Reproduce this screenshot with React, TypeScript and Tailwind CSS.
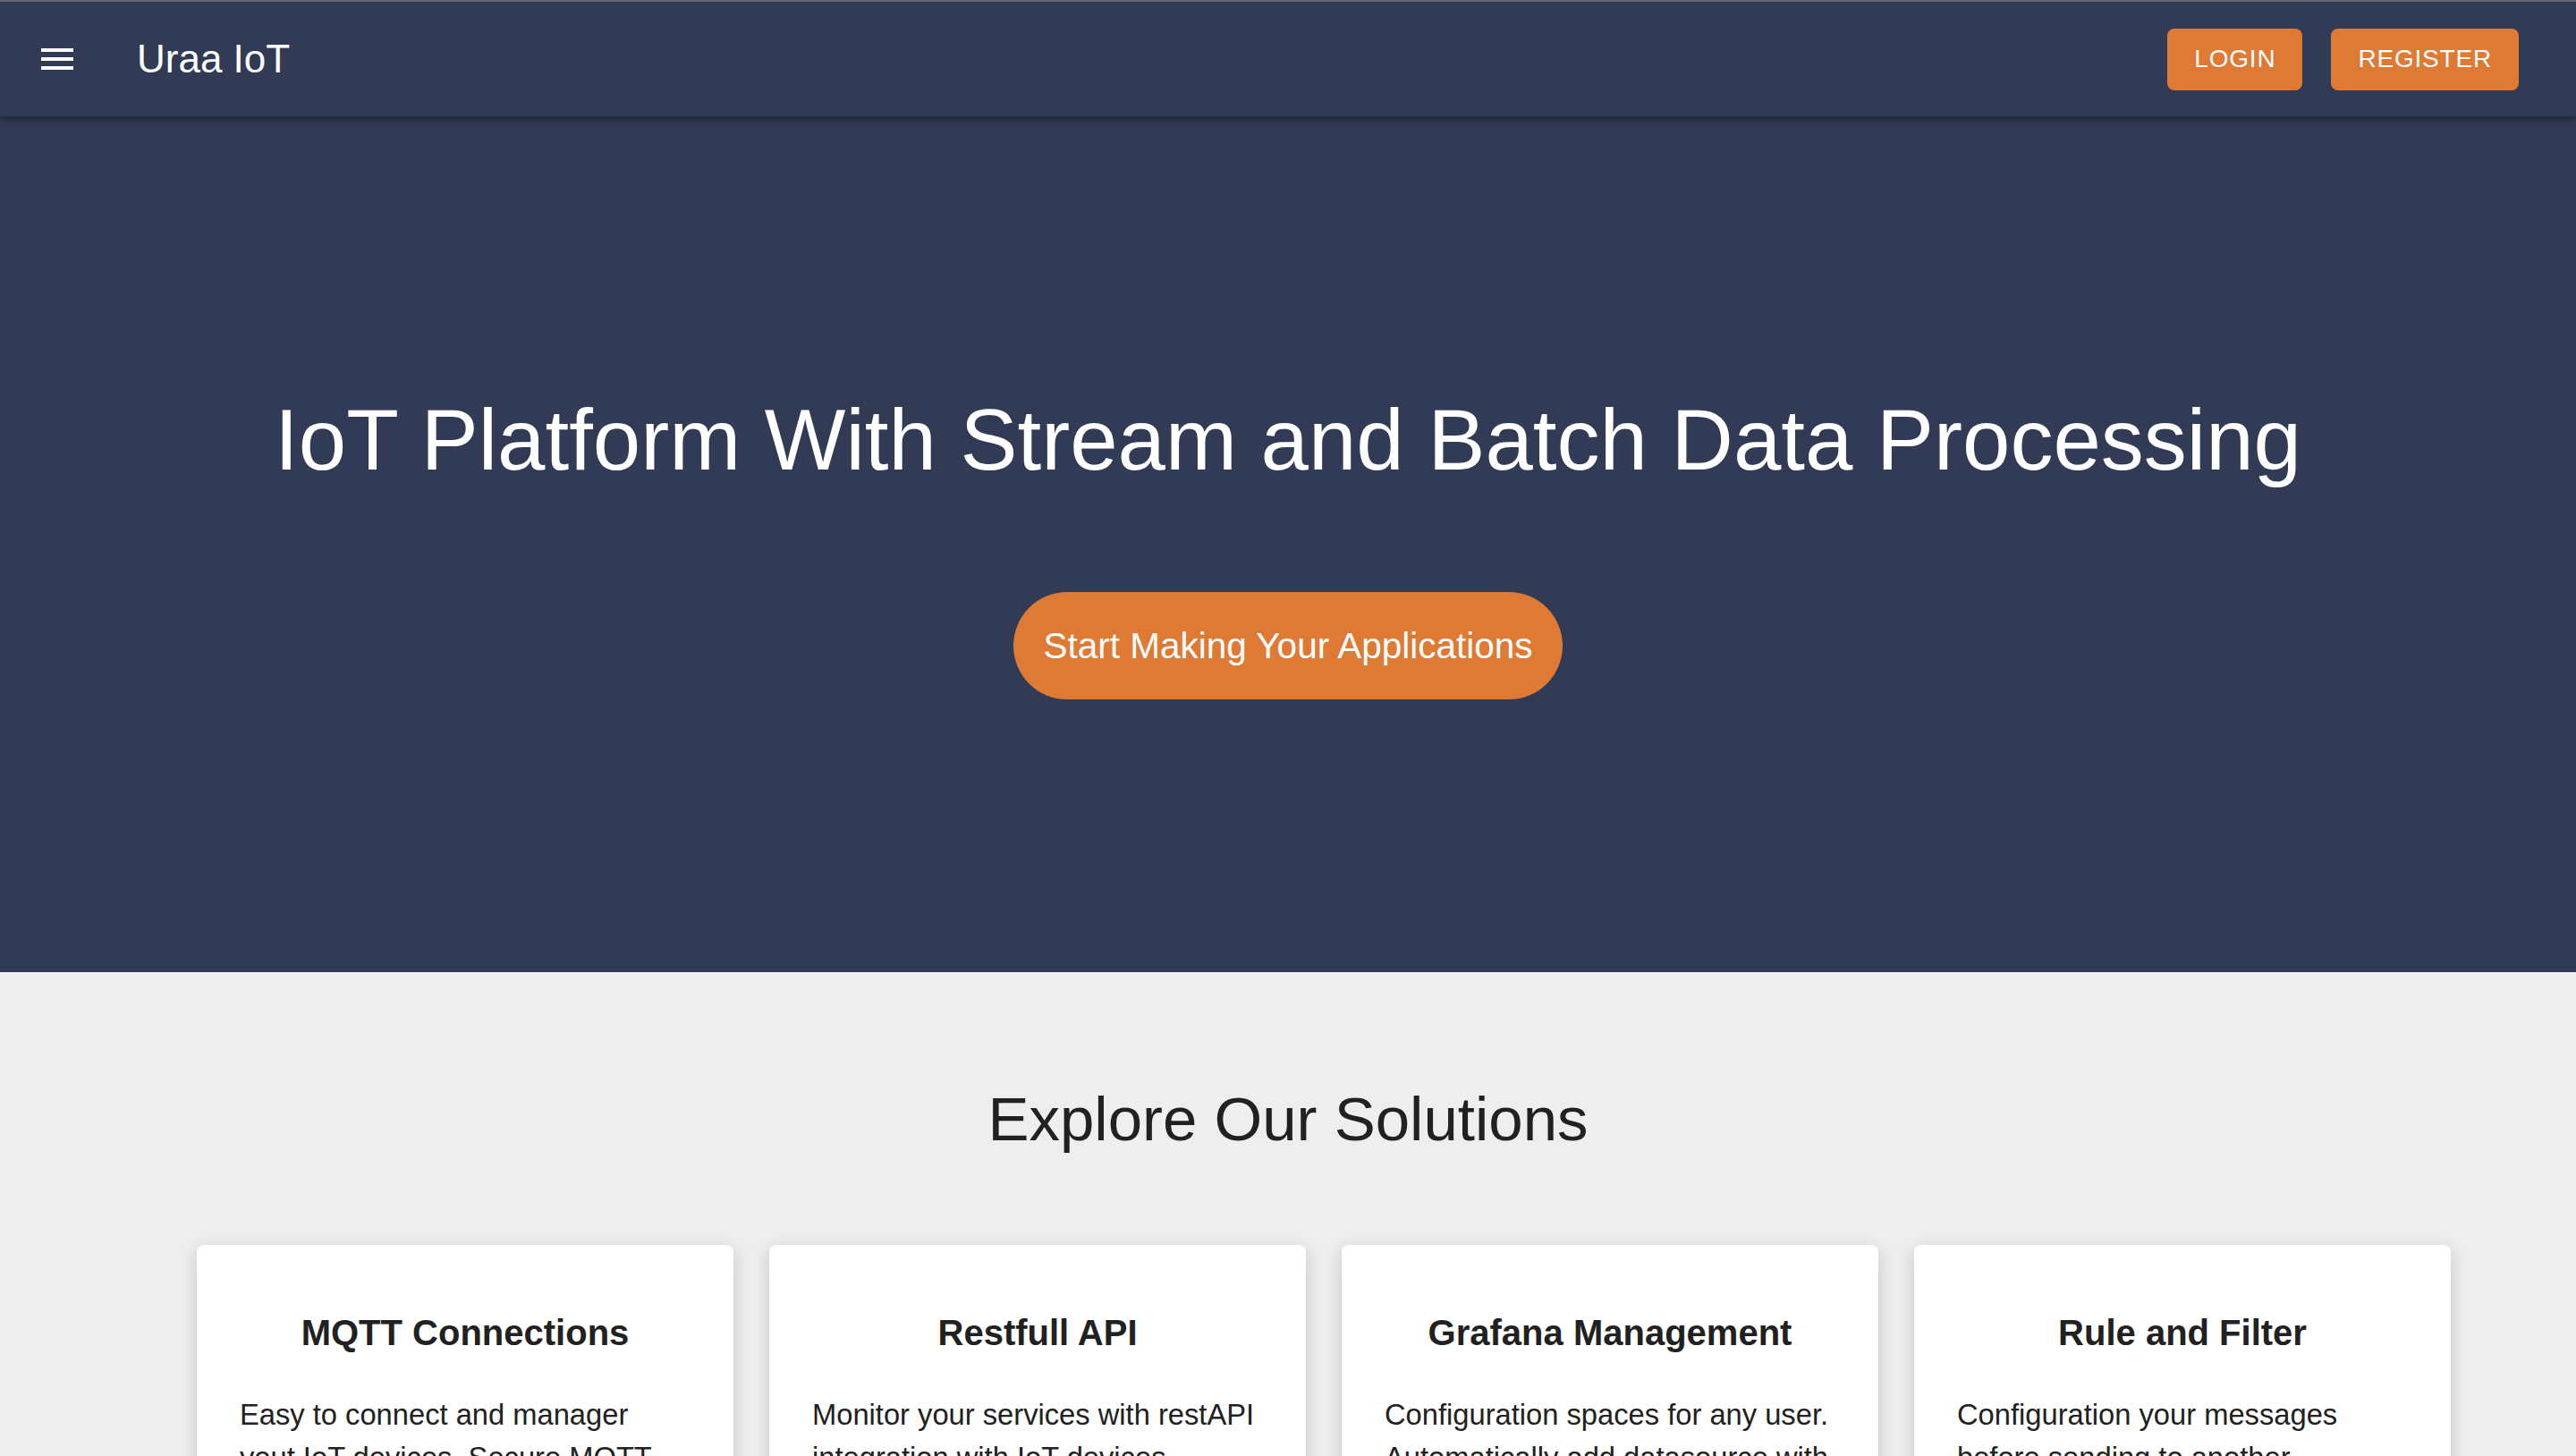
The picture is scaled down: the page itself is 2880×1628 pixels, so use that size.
import React from "react"

type Solution = {
  title: string
  text: string
}

const solutions: Solution[] = [
  {
    title: "MQTT Connections",
    text: "Easy to connect and manager yout IoT devices. Secure MQTT broker with user authentication.",
  },
  {
    title: "Restfull API",
    text: "Monitor your services with restAPI integration with IoT devices.",
  },
  {
    title: "Grafana Management",
    text: "Configuration spaces for any user. Automatically add datasource with your dashboards.",
  },
  {
    title: "Rule and Filter",
    text: "Configuration your messages before sending to another destinations and databases.",
  },
]

function MenuIcon() {
  return (
    <svg viewBox="0 0 24 24" className="w-12 h-12 fill-white">
      <path d="M3 18h18v-2H3v2zm0-5h18v-2H3v2zm0-7v2h18V6H3z" />
    </svg>
  )
}

function NavButton({ label }: { label: string }) {
  return (
    <button className="h-[69px] px-[30px] rounded-[8px] bg-[#de7a34] text-white text-[28px] uppercase tracking-[0.8px] leading-none">
      {label}
    </button>
  )
}

export default function App() {
  return (
    <div className="min-h-screen bg-[#eeeeee] font-['Liberation_Sans',Arial,sans-serif] text-[#212121]">
      {/* Top bar */}
      <header className="relative z-10 h-[130px] border-t-2 border-[#686868] bg-[#323b55] shadow-[0_4px_10px_rgba(0,0,0,0.35)] flex items-center pl-[40px] pr-[64px]">
        <MenuIcon />
        <span className="ml-[65px] text-white text-[44px] leading-none">Uraa IoT</span>
        <div className="ml-auto flex gap-[32px]">
          <NavButton label="Login" />
          <NavButton label="Register" />
        </div>
      </header>

      {/* Hero */}
      <section className="bg-[#323b55] pt-[304px] pb-[305px] flex flex-col items-center">
        <h1 className="text-white text-[96px] leading-[1.2] font-normal">
          IoT Platform With Stream and Batch Data Processing
        </h1>
        <button className="mt-[113px] h-[120px] px-[33px] rounded-full bg-[#de7a34] text-white text-[40.5px] leading-none">
          Start Making Your Applications
        </button>
      </section>

      {/* Solutions */}
      <section className="pt-[124px] pb-[80px]">
        <h2 className="text-center text-[69px] leading-[1.2] font-normal">Explore Our Solutions</h2>
        <div className="mt-[98px] pl-[220px] pr-[140px] grid grid-cols-4 gap-[40px]">
          {solutions.map((s) => (
            <div
              key={s.title}
              className="bg-white rounded-[8px] shadow-[0_6px_20px_rgba(0,0,0,0.18)] pt-[74px] pb-[60px] px-[48px]"
            >
              <h3 className="text-center text-[40px] leading-[48px] font-bold">{s.title}</h3>
              <p className="mt-[44px] text-[32.7px] leading-[48px]">{s.text}</p>
            </div>
          ))}
        </div>
      </section>
    </div>
  )
}
